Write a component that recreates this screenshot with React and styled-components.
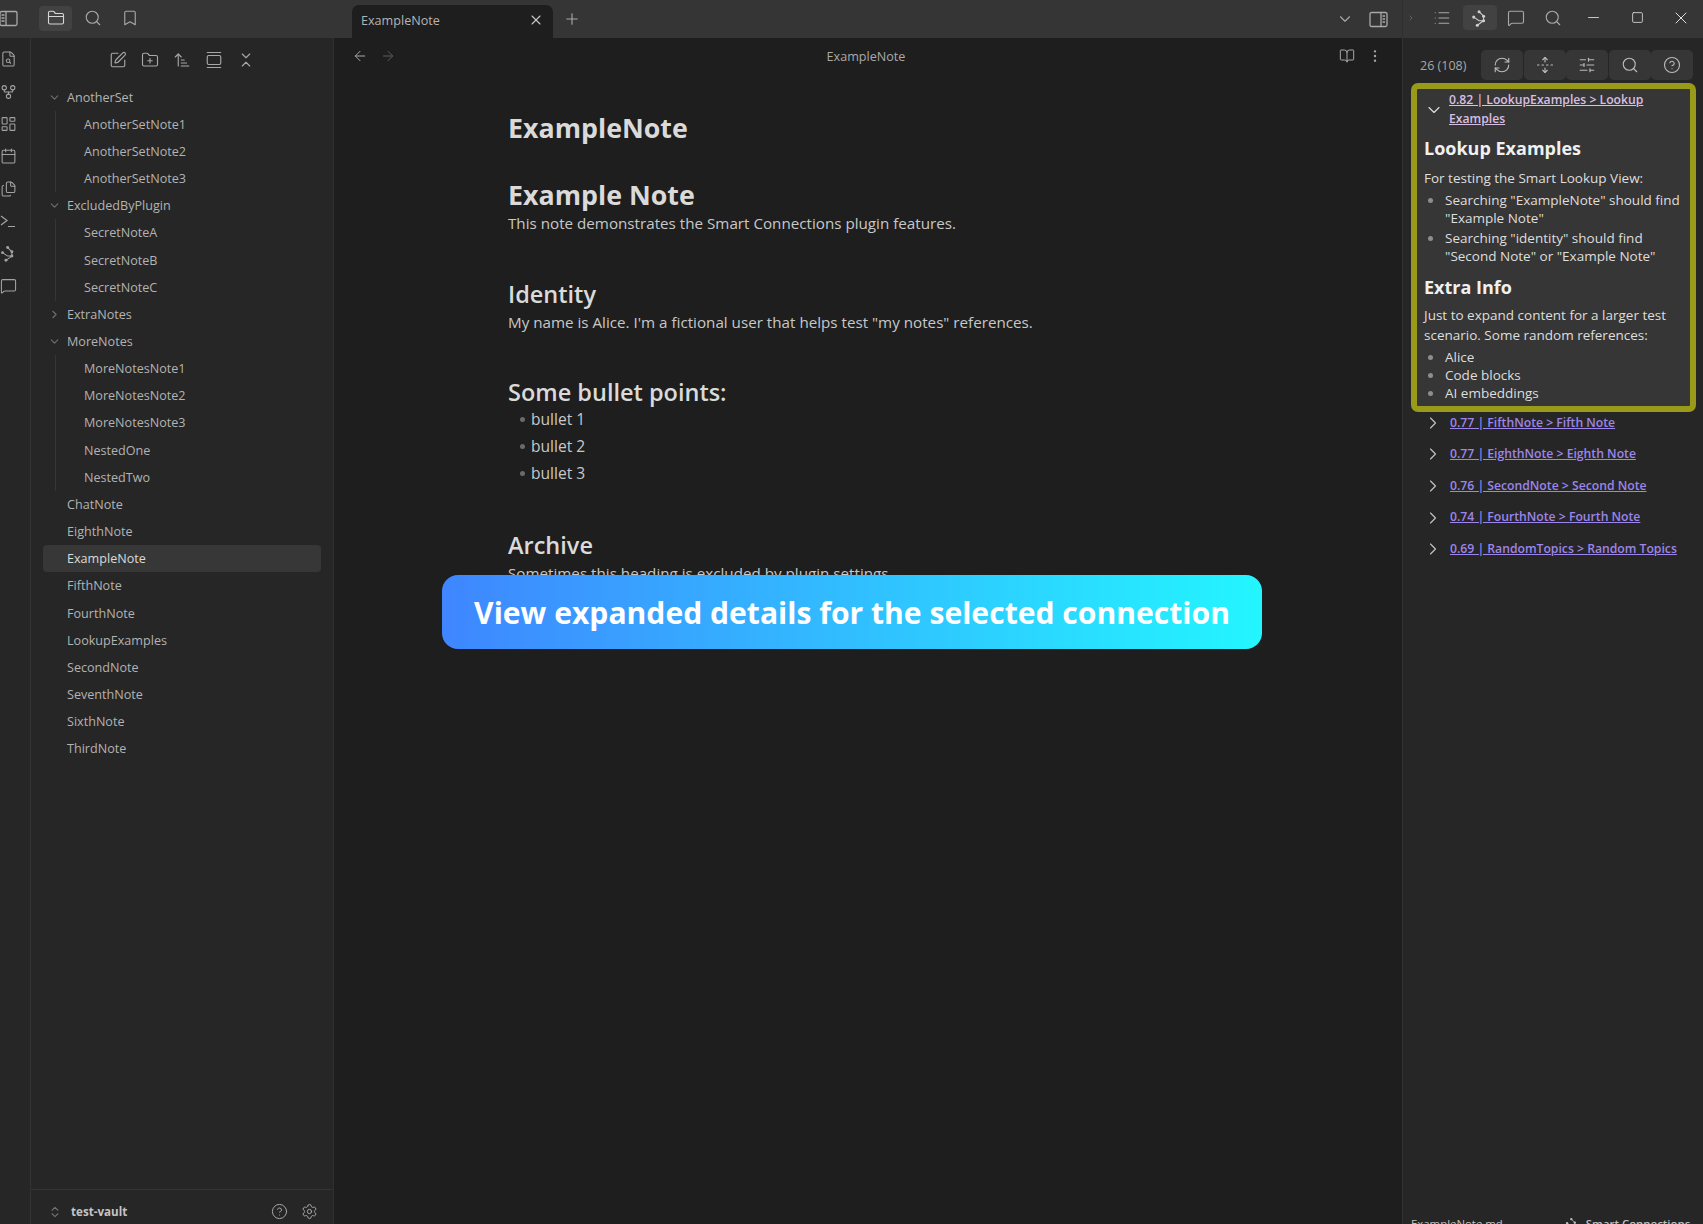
import React from "react";
import styled, { createGlobalStyle } from "styled-components";
import {
  FolderClosed,
  Search,
  Bookmark,
  FileSearch,
  GitFork,
  LayoutDashboard,
  Calendar,
  Files,
  ChevronDown,
  ChevronRight,
  ChevronsUpDown,
  SquarePen,
  FolderPlus,
  ArrowUpNarrowWide,
  GalleryVertical,
  ChevronsDownUp,
  MessageSquare,
  X,
  Plus,
  ArrowLeft,
  ArrowRight,
  BookOpen,
  EllipsisVertical,
  List,
  Minus,
  Square,
  RefreshCw,
  UnfoldVertical,
  SlidersHorizontal,
  CircleHelp,
  Settings,
} from "lucide-react";

const GlobalStyle = createGlobalStyle`
  html, body {
    margin: 0;
    padding: 0;
    background: #1e1e1e;
  }
  body {
    font-family: "Open Sans", "Noto Sans", "Liberation Sans", sans-serif;
  }
  * {
    box-sizing: border-box;
  }
`;

const Frame = styled.div`
  position: relative;
  width: 1703px;
  height: 1224px;
  overflow: hidden;
  display: flex;
  flex-direction: column;
  color: #dadada;
`;

/* title bar */
const TitleBar = styled.header`
  height: 38px;
  flex: none;
  display: flex;
  align-items: flex-end;
  background: #353535;
`;

const IconButton = styled.div`
  width: ${(p) => p.$w || 33}px;
  height: 25px;
  flex: none;
  display: flex;
  align-items: center;
  justify-content: center;
  border-radius: 4px;
  color: ${(p) => p.$color || "#a8a8a8"};
  background: ${(p) => (p.$active ? "#424242" : "transparent")};
`;

const TitleLeft = styled.div`
  width: 352px;
  height: 38px;
  flex: none;
  display: flex;
  align-items: center;
  gap: 4px;
  padding: 0 0 2px 39px;
`;

const CutIcon = styled.div`
  width: 39px;
  margin-left: -40px;
  margin-right: -3px;
  color: #a8a8a8;
  display: flex;
  align-items: center;
`;

const Tab = styled.div`
  width: 201px;
  height: 33px;
  flex: none;
  display: flex;
  align-items: center;
  justify-content: space-between;
  padding: 0 9px 3px 9px;
  background: #1e1e1e;
  border-radius: 7px 7px 0 0;
  font-size: 12.6px;
  color: #b4b4b4;
`;

const TabTools = styled.div`
  flex: 1;
  height: 38px;
  display: flex;
  align-items: center;
  padding: 0 0 0 6px;
  justify-content: space-between;
`;

const TabRight = styled.div`
  display: flex;
  align-items: center;
  gap: 3px;
  padding-right: 9px;
`;

const TitleRight = styled.div`
  width: 301px;
  height: 38px;
  flex: none;
  display: flex;
  align-items: center;
  padding: 0 0 3px 4px;
  border-left: 1px solid #2f2f2f;
  background: #363636;
`;

const OverflowCaret = styled.span`
  display: flex;
  margin-right: 6px;
  color: #777;
`;

const WindowButtons = styled.div`
  display: flex;
  align-items: center;
  margin-left: 1px;
`;

/* body */
const Body = styled.div`
  flex: 1;
  min-height: 0;
  display: flex;
`;

const Ribbon = styled.nav`
  width: 31px;
  flex: none;
  display: flex;
  flex-direction: column;
  padding-top: 5px;
  background: #262626;
  border-right: 1px solid #333;
`;

const RibbonItem = styled.div`
  height: 32.4px;
  width: 17px;
  display: flex;
  align-items: center;
  justify-content: center;
  color: #a3a3a3;
`;

const LeftPanel = styled.aside`
  width: 303px;
  flex: none;
  display: flex;
  flex-direction: column;
  background: #262626;
  border-right: 1px solid #2f2f2f;
`;

const NavTools = styled.div`
  height: 45px;
  flex: none;
  display: flex;
  align-items: center;
  justify-content: center;
  padding: 0 0 1px 2px;
  gap: 6px;
  margin-left: -3px;
`;

const Tree = styled.div`
  flex: 1;
  padding: 0.5px 12px 0;
`;

const TreeRow = styled.div`
  height: 27.17px;
  display: flex;
  align-items: center;
  padding-left: 24px;
  position: relative;
  font-size: 12.6px;
  border-radius: 4px;
  color: ${(p) => (p.$active ? "#dadada" : "#b3b3b3")};
  background: ${(p) => (p.$active ? "#373737" : "transparent")};
`;

const Caret = styled.span`
  position: absolute;
  left: 5px;
  top: 7px;
  color: #6f6f6f;
  display: flex;
`;

const Guide = styled.div`
  margin-left: 12px;
  border-left: 1px solid #363636;
  ${TreeRow} {
    padding-left: 28px;
  }
`;

const VaultBar = styled.footer`
  height: 35px;
  flex: none;
  display: flex;
  align-items: flex-start;
  padding: 9px 9px 0 17px;
  border-top: 1px solid #333;
`;

const VaultName = styled.div`
  margin-left: 9px;
  flex: 1;
  line-height: 25px;
  font-size: 11.6px;
  font-weight: 700;
  color: #c4c4c4;
`;

const VaultCaret = styled.span`
  display: flex;
  margin-top: 6px;
  color: #6f6f6f;
`;

/* main note */
const Main = styled.main`
  flex: 1;
  min-width: 0;
  display: flex;
  flex-direction: column;
  background: #1e1e1e;
`;

const MainBar = styled.div`
  height: 38px;
  flex: none;
  display: grid;
  grid-template-columns: 1fr auto 1fr;
  align-items: center;
  padding: 0 18px 2px 14px;
`;

const NavGroup = styled.div`
  display: flex;
  align-items: center;
  justify-content: ${(p) => (p.$end ? "flex-end" : "flex-start")};
  gap: ${(p) => (p.$end ? 10 : 6)}px;
`;

const MainTitle = styled.div`
  font-size: 12.6px;
  color: #a9a9a9;
`;

const Note = styled.article`
  padding: 34px 0 0 174px;
`;

const InlineTitle = styled.h1`
  margin: 0 0 33px;
  font-size: 26.8px;
  line-height: 36px;
  font-weight: 700;
  color: #dadada;
`;

const NoteH1 = styled.h2`
  margin: 0;
  font-size: 26.8px;
  line-height: 32px;
  font-weight: 700;
  color: #dadada;
`;

const NoteH2 = styled.h3`
  margin: 42.5px 0 0;
  font-size: 23.5px;
  line-height: 32px;
  font-weight: 600;
  color: #dadada;
`;

const NoteText = styled.p`
  margin: 0;
  font-size: 15.2px;
  line-height: 24px;
  color: #c8c8c8;
`;

const NoteList = styled.ul`
  list-style: none;
  margin: -2px 0 -1px;
  padding: 0 0 0 23px;
`;

const NoteItem = styled.li`
  position: relative;
  font-size: 15.6px;
  line-height: 27px;
  color: #c8c8c8;
  &::before {
    content: "";
    position: absolute;
    left: -11px;
    top: 11px;
    width: 5px;
    height: 5px;
    border-radius: 50%;
    background: #6a6a6a;
  }
`;

const Banner = styled.div`
  position: absolute;
  left: 442px;
  top: 575px;
  width: 820px;
  height: 74px;
  display: flex;
  align-items: center;
  justify-content: center;
  border-radius: 16px;
  background: linear-gradient(90deg, #3f86ff 0%, #23f6ff 100%);
  color: #fff;
  font-size: 30.1px;
  font-weight: 700;
`;

/* right panel */
const RightPanel = styled.aside`
  width: 301px;
  flex: none;
  display: flex;
  flex-direction: column;
  background: #262626;
  border-left: 1px solid #333;
  padding-left: 8px;
`;

const ConnToolbar = styled.div`
  height: 42px;
  flex: none;
  display: flex;
  align-items: flex-end;
  padding: 0 0 0 9px;
  gap: 0.4px;
`;

const ConnCount = styled.div`
  width: 61px;
  height: 30px;
  display: flex;
  align-items: center;
  font-size: 12.5px;
  color: #a8a8a8;
`;

const ToolButton = styled.div`
  width: 42px;
  height: 30px;
  display: flex;
  align-items: center;
  justify-content: center;
  border-radius: 5px;
  background: #363636;
  color: #bbb;
`;

const ResultCard = styled.section`
  width: 285px;
  margin-top: 3px;
  padding: 2px 6px 4px 7px;
  border: 6px solid #99991a;
  border-radius: 7px;
  background: #363636;
  display: flex;
  flex-direction: column;
`;

const CardHead = styled.div`
  display: flex;
  align-items: center;
`;

const HeadCaret = styled.span`
  width: 25px;
  flex: none;
  display: flex;
  color: #dcdcdc;
`;

const ResultLink = styled.a`
  font-size: 12.2px;
  line-height: 18.5px;
  font-weight: 600;
  text-decoration: underline;
  color: ${(p) => (p.$open ? "#d8bfe2" : "#9d85ea")};
`;

const CardH2 = styled.h4`
  margin: ${(p) => (p.$first ? "6px" : "8px")} 0 0;
  font-size: 18px;
  line-height: 28px;
  font-weight: 700;
  color: #f0f0f0;
`;

const CardText = styled.p`
  margin: ${(p) => (p.$lead ? 6 : 4)}px 0 0;
  font-size: 13.5px;
  line-height: 20px;
  color: #dedede;
`;

const CardList = styled.ul`
  list-style: none;
  margin: 3px 0 0;
  padding: 0 0 0 21px;
  display: flex;
  flex-direction: column;
  gap: ${(p) => p.$gap || 0}px;
`;

const CardItem = styled.li`
  position: relative;
  font-size: 13.5px;
  line-height: 18px;
  color: #dedede;
  &::before {
    content: "";
    position: absolute;
    left: -17px;
    top: 7px;
    width: 5px;
    height: 5px;
    border-radius: 50%;
    background: #8e8e8e;
  }
`;

const ResultRows = styled.div`
  display: flex;
  flex-direction: column;
  margin-top: -5px;
  padding: 0 0 0 14px;
`;

const ResultRow = styled.div`
  height: 31.6px;
  display: flex;
  align-items: center;
`;

const RowCaret = styled.span`
  width: 27px;
  flex: none;
  display: flex;
  color: #c2c2c2;
  margin-left: -2px;
`;

const StatusBar = styled.div`
  margin-top: auto;
  margin-bottom: -8px;
  height: 17px;
  flex: none;
  display: flex;
  align-items: center;
  font-size: 11.4px;
  color: #c0c0c0;
  white-space: nowrap;
`;

const StatusItem = styled.span`
  display: flex;
  align-items: center;
  gap: 7px;
  margin-left: ${(p) => p.$gap || 0}px;
  font-weight: ${(p) => (p.$bold ? 600 : 400)};
`;

function ConnectIcon({ size = 18 }) {
  return (
    <svg width={size} height={size} viewBox="0 0 20 20" fill="none" stroke="currentColor" strokeWidth="1.2">
      <path d="M9 3 L14 8 L14 13 L7 18 M3 9 L9 13 L14 13" />
      <g fill="currentColor" stroke="none">
        <circle cx="9" cy="3" r="1.7" />
        <circle cx="14" cy="8" r="1.7" />
        <circle cx="3" cy="9" r="1.7" />
        <circle cx="14" cy="13" r="1.7" />
        <circle cx="7" cy="18" r="1.7" />
      </g>
    </svg>
  );
}

function SidebarIcon({ right, size = 19 }) {
  return (
    <svg width={size} height={size} viewBox="0 0 19 19" fill="none" stroke="currentColor" strokeWidth="1.3">
      <rect x="1" y="2.5" width="17" height="14" rx="1.5" />
      <path d={right ? "M12 2.5V16.5" : "M7 2.5V16.5"} />
      <path d={right ? "M13.5 6H16M13.5 9H16M13.5 12H16" : "M2.5 6H5.5M2.5 9H5.5M2.5 12H5.5"} />
    </svg>
  );
}

function TerminalMark() {
  return (
    <svg width="18" height="18" viewBox="0 0 17 17" fill="none" stroke="currentColor" strokeWidth="1.2">
      <path d="M1 3.5L7 8L1 12.5M8 14H15" />
    </svg>
  );
}

const ribbon = [
  <FileSearch size={18} strokeWidth={1.5} />,
  <GitFork size={18} strokeWidth={1.5} />,
  <LayoutDashboard size={18} strokeWidth={1.5} />,
  <Calendar size={18} strokeWidth={1.5} />,
  <Files size={18} strokeWidth={1.5} />,
  <TerminalMark />,
  <ConnectIcon size={17} />,
  <MessageSquare size={18} strokeWidth={1.5} />,
];

const folders = [
  { name: "AnotherSet", open: true, notes: ["AnotherSetNote1", "AnotherSetNote2", "AnotherSetNote3"] },
  { name: "ExcludedByPlugin", open: true, notes: ["SecretNoteA", "SecretNoteB", "SecretNoteC"] },
  { name: "ExtraNotes" },
  {
    name: "MoreNotes",
    open: true,
    notes: ["MoreNotesNote1", "MoreNotesNote2", "MoreNotesNote3", "NestedOne", "NestedTwo"],
  },
];

const rootNotes = [
  "ChatNote",
  "EighthNote",
  "ExampleNote",
  "FifthNote",
  "FourthNote",
  "LookupExamples",
  "SecondNote",
  "SeventhNote",
  "SixthNote",
  "ThirdNote",
];

const results = [
  "0.77 | FifthNote > Fifth Note",
  "0.77 | EighthNote > Eighth Note",
  "0.76 | SecondNote > Second Note",
  "0.74 | FourthNote > Fourth Note",
  "0.69 | RandomTopics > Random Topics",
];

export default function App() {
  return (
    <Frame>
      <GlobalStyle />
      <TitleBar>
        <TitleLeft>
          <CutIcon>
            <SidebarIcon />
          </CutIcon>
          <IconButton $active $color="#d6d6d6">
            <FolderClosed size={18} strokeWidth={1.5} />
          </IconButton>
          <IconButton>
            <Search size={18} strokeWidth={1.5} />
          </IconButton>
          <IconButton>
            <Bookmark size={18} strokeWidth={1.5} />
          </IconButton>
        </TitleLeft>
        <Tab>
          ExampleNote
          <X size={16} strokeWidth={1.6} color="#c8c8c8" />
        </Tab>
        <TabTools>
          <IconButton $w={26}>
            <Plus size={18} strokeWidth={1.5} />
          </IconButton>
          <TabRight>
            <IconButton $w={30}>
              <ChevronDown size={18} strokeWidth={1.5} />
            </IconButton>
            <IconButton $w={30}>
              <SidebarIcon right />
            </IconButton>
          </TabRight>
        </TabTools>
        <TitleRight>
          <OverflowCaret>
            <ChevronRight size={8} />
          </OverflowCaret>
          <IconButton $w={42}>
            <List size={18} strokeWidth={1.5} />
          </IconButton>
          <IconButton $active $color="#d0d0d0" $w={34}>
            <ConnectIcon />
          </IconButton>
          <IconButton $w={38}>
            <MessageSquare size={18} strokeWidth={1.5} />
          </IconButton>
          <IconButton $w={36}>
            <Search size={18} strokeWidth={1.5} />
          </IconButton>
          <WindowButtons>
            <IconButton $w={43.5} $color="#e0e0e0">
              <Minus size={17} strokeWidth={1.2} />
            </IconButton>
            <IconButton $w={43.5} $color="#e0e0e0">
              <Square size={13} strokeWidth={1.5} />
            </IconButton>
            <IconButton $w={43.5} $color="#e0e0e0">
              <X size={20} strokeWidth={1.2} />
            </IconButton>
          </WindowButtons>
        </TitleRight>
      </TitleBar>

      <Body>
        <Ribbon>
          {ribbon.map((icon, i) => (
            <RibbonItem key={i}>{icon}</RibbonItem>
          ))}
        </Ribbon>

        <LeftPanel>
          <NavTools>
            <IconButton $w={26}>
              <SquarePen size={18} strokeWidth={1.5} />
            </IconButton>
            <IconButton $w={26}>
              <FolderPlus size={18} strokeWidth={1.5} />
            </IconButton>
            <IconButton $w={26}>
              <ArrowUpNarrowWide size={18} strokeWidth={1.5} />
            </IconButton>
            <IconButton $w={26}>
              <GalleryVertical size={18} strokeWidth={1.5} />
            </IconButton>
            <IconButton $w={26}>
              <ChevronsDownUp size={18} strokeWidth={1.5} />
            </IconButton>
          </NavTools>
          <Tree>
            {folders.map((f) => (
              <React.Fragment key={f.name}>
                <TreeRow>
                  <Caret>{f.open ? <ChevronDown size={13} /> : <ChevronRight size={13} />}</Caret>
                  {f.name}
                </TreeRow>
                {f.notes && (
                  <Guide>
                    {f.notes.map((n) => (
                      <TreeRow key={n}>{n}</TreeRow>
                    ))}
                  </Guide>
                )}
              </React.Fragment>
            ))}
            {rootNotes.map((n) => (
              <TreeRow key={n} $active={n === "ExampleNote"}>
                {n}
              </TreeRow>
            ))}
          </Tree>
          <VaultBar>
            <VaultCaret>
              <ChevronsUpDown size={14} />
            </VaultCaret>
            <VaultName>test-vault</VaultName>
            <IconButton $w={30}>
              <CircleHelp size={17} strokeWidth={1.4} />
            </IconButton>
            <IconButton $w={30}>
              <Settings size={17} strokeWidth={1.4} />
            </IconButton>
          </VaultBar>
        </LeftPanel>

        <Main>
          <MainBar>
            <NavGroup>
              <IconButton $w={24}>
                <ArrowLeft size={16} strokeWidth={1.5} />
              </IconButton>
              <IconButton $w={20} $color="#5c5c5c">
                <ArrowRight size={16} strokeWidth={1.5} />
              </IconButton>
            </NavGroup>
            <MainTitle>ExampleNote</MainTitle>
            <NavGroup $end>
              <IconButton $w={18}>
                <BookOpen size={16} strokeWidth={1.5} />
              </IconButton>
              <IconButton $w={18}>
                <EllipsisVertical size={16} strokeWidth={1.6} />
              </IconButton>
            </NavGroup>
          </MainBar>
          <Note>
            <InlineTitle>ExampleNote</InlineTitle>
            <NoteH1>Example Note</NoteH1>
            <NoteText>This note demonstrates the Smart Connections plugin features.</NoteText>
            <NoteH2>Identity</NoteH2>
            <NoteText>My name is Alice. I'm a fictional user that helps test "my notes" references.</NoteText>
            <NoteH2>Some bullet points:</NoteH2>
            <NoteList>
              <NoteItem>bullet 1</NoteItem>
              <NoteItem>bullet 2</NoteItem>
              <NoteItem>bullet 3</NoteItem>
            </NoteList>
            <NoteH2>Archive</NoteH2>
            <NoteText>Sometimes this heading is excluded by plugin settings.</NoteText>
          </Note>
        </Main>

        <RightPanel>
          <ConnToolbar>
            <ConnCount>26 (108)</ConnCount>
            <ToolButton>
              <RefreshCw size={18} strokeWidth={1.5} />
            </ToolButton>
            <ToolButton>
              <UnfoldVertical size={18} strokeWidth={1.5} />
            </ToolButton>
            <ToolButton>
              <SlidersHorizontal size={18} strokeWidth={1.5} />
            </ToolButton>
            <ToolButton>
              <Search size={18} strokeWidth={1.5} />
            </ToolButton>
            <ToolButton>
              <CircleHelp size={18} strokeWidth={1.5} />
            </ToolButton>
          </ConnToolbar>
          <ResultCard>
            <CardHead>
              <HeadCaret>
                <ChevronDown size={20} strokeWidth={1.4} />
              </HeadCaret>
              <ResultLink $open>0.82 | LookupExamples &gt; Lookup Examples</ResultLink>
            </CardHead>
            <CardH2 $first>Lookup Examples</CardH2>
            <CardText $lead>For testing the Smart Lookup View:</CardText>
            <CardList $gap={2}>
              <CardItem>Searching "ExampleNote" should find "Example Note"</CardItem>
              <CardItem>Searching "identity" should find "Second Note" or "Example Note"</CardItem>
            </CardList>
            <CardH2>Extra Info</CardH2>
            <CardText>Just to expand content for a larger test scenario. Some random references:</CardText>
            <CardList>
              <CardItem>Alice</CardItem>
              <CardItem>Code blocks</CardItem>
              <CardItem>AI embeddings</CardItem>
            </CardList>
          </ResultCard>
          <ResultRows>
            {results.map((r) => (
              <ResultRow key={r}>
                <RowCaret>
                  <ChevronRight size={20} strokeWidth={1.4} />
                </RowCaret>
                <ResultLink>{r}</ResultLink>
              </ResultRow>
            ))}
          </ResultRows>
          <StatusBar>
            <StatusItem>ExampleNote.md</StatusItem>
            <StatusItem $gap={62} $bold>
              <ConnectIcon size={14} />
              Smart Connections
            </StatusItem>
          </StatusBar>
        </RightPanel>
      </Body>

      <Banner>View expanded details for the selected connection</Banner>
    </Frame>
  );
}
